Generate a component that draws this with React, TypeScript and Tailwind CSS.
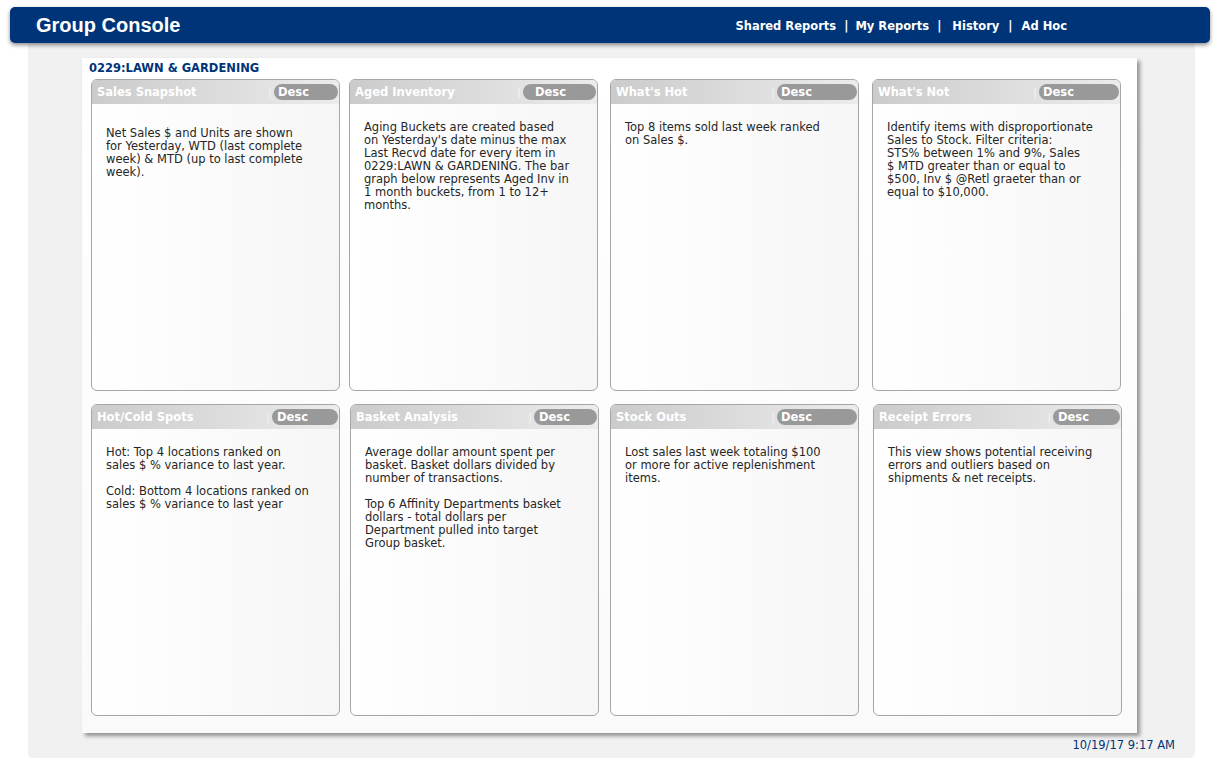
import React from "react";

type Card = {
  title: string;
  pillW: string;
  pillPl: string;
  pt: string;
  lines: string[];
  ml: string;
};

const top: Card[] = [
  {
    title: "Sales Snapshot",
    pillW: "w-[64px]",
    pillPl: "pl-[4px]",
    pt: "pt-[23px]",
    ml: "ml-[9px]",
    lines: [
      "Net Sales $ and Units are shown",
      "for Yesterday, WTD (last complete",
      "week) & MTD (up to last complete",
      "week).",
    ],
  },
  {
    title: "Aged Inventory",
    pillW: "w-[73px]",
    pillPl: "pl-[12px]",
    pt: "pt-[17px]",
    ml: "ml-[9px]",
    lines: [
      "Aging Buckets are created based",
      "on Yesterday's date minus the max",
      "Last Recvd date for every item in",
      "0229:LAWN & GARDENING. The bar",
      "graph below represents Aged Inv in",
      "1 month buckets, from 1 to 12+",
      "months.",
    ],
  },
  {
    title: "What's Hot",
    pillW: "w-[80px]",
    pillPl: "pl-[4px]",
    pt: "pt-[17px]",
    ml: "ml-[12px]",
    lines: ["Top 8 items sold last week ranked", "on Sales $."],
  },
  {
    title: "What's Not",
    pillW: "w-[80px]",
    pillPl: "pl-[4px]",
    pt: "pt-[17px]",
    ml: "ml-[13px]",
    lines: [
      "Identify items with disproportionate",
      "Sales to Stock. Filter criteria:",
      "STS% between 1% and 9%, Sales",
      "$ MTD greater than or equal to",
      "$500, Inv $ @Retl graeter than or",
      "equal to $10,000.",
    ],
  },
];

const bottom: Card[] = [
  {
    title: "Hot/Cold Spots",
    pillW: "w-[66px]",
    pillPl: "pl-[5px]",
    pt: "pt-[17px]",
    ml: "ml-[9px]",
    lines: [
      "Hot: Top 4 locations ranked on",
      "sales $ % variance to last year.",
      "",
      "Cold: Bottom 4 locations ranked on",
      "sales $ % variance to last year",
    ],
  },
  {
    title: "Basket Analysis",
    pillW: "w-[63px]",
    pillPl: "pl-[5px]",
    pt: "pt-[17px]",
    ml: "ml-[10px]",
    lines: [
      "Average dollar amount spent per",
      "basket. Basket dollars divided by",
      "number of transactions.",
      "",
      "Top 6 Affinity Departments basket",
      "dollars - total dollars per",
      "Department pulled into target",
      "Group basket.",
    ],
  },
  {
    title: "Stock Outs",
    pillW: "w-[80px]",
    pillPl: "pl-[4px]",
    pt: "pt-[17px]",
    ml: "ml-[11px]",
    lines: [
      "Lost sales last week totaling $100",
      "or more for active replenishment",
      "items.",
    ],
  },
  {
    title: "Receipt Errors",
    pillW: "w-[67px]",
    pillPl: "pl-[5px]",
    pt: "pt-[17px]",
    ml: "ml-[14px]",
    lines: [
      "This view shows potential receiving",
      "errors and outliers based on",
      "shipments & net receipts.",
    ],
  },
];

function CardBox({ c }: { c: Card }) {
  return (
    <div
      className={`${c.ml} w-[249px] h-[312px] border border-[#a6a6a6] rounded-[6px] overflow-hidden flex flex-col bg-gradient-to-r from-white to-[#f6f6f6]`}
    >
      <div className="h-[24px] shrink-0 flex items-center bg-gradient-to-r from-[#cbcbcb] to-[#ececec]">
        <div className="flex-1 pl-[5px] text-white font-bold text-[11.5px] leading-[13px] whitespace-nowrap">
          {c.title}
        </div>
        <span className="text-[#f4f4f4] text-[11px] leading-[13px] mr-[2px]">|</span>
        <div
          className={`${c.pillW} ${c.pillPl} h-[16px] mr-[1px] rounded-full bg-[#999999] text-white font-bold text-[11.5px] leading-[16px] whitespace-nowrap`}
        >
          Desc
        </div>
      </div>
      <div className={`${c.pt} pl-[14px] text-[11.5px] leading-[13px] text-[#262626]`}>
        {c.lines.map((l, i) => (
          <div key={i} className="h-[13px] whitespace-nowrap">
            {l}
          </div>
        ))}
      </div>
    </div>
  );
}

export default function App() {
  return (
    <div
      className="w-[1225px] h-[778px] bg-white overflow-hidden"
      style={{ fontFamily: '"DejaVu Sans", Verdana, sans-serif' }}
    >
      <div className="pt-[7px]">
        <div className="ml-[10px] w-[1200px] h-[36px] rounded-[5px] bg-[#003478] shadow-[0_2px_4px_rgba(0,0,0,0.45)] flex items-center relative z-10">
          <div
            className="pl-[26px] text-white font-bold text-[20px] leading-[24px]"
            style={{ fontFamily: '"Liberation Sans", Arial, sans-serif' }}
          >
            Group Console
          </div>
          <div className="ml-auto mr-[143px] mt-[2px] flex items-center text-white font-bold text-[11.5px] leading-[13px] whitespace-nowrap">
            <span>Shared Reports</span>
            <span className="ml-[8px]">|</span>
            <span className="ml-[7px]">My Reports</span>
            <span className="ml-[8px]">|</span>
            <span className="ml-[11px]">History</span>
            <span className="ml-[9px]">|</span>
            <span className="ml-[9px]">Ad Hoc</span>
          </div>
        </div>
        <div className="ml-[28px] w-[1167px] h-[715px] bg-[#f1f1f1] rounded-b-[5px] pt-[15px]">
          <div className="ml-[54px] w-[1055px] h-[675px] bg-gradient-to-b from-white to-[#fafafa] shadow-[3px_3px_4px_rgba(0,0,0,0.4)] pt-[4px]">
            <div className="pl-[7px] text-[#003478] font-bold text-[11.5px] leading-[13px]">
              0229:LAWN &amp; GARDENING
            </div>
            <div className="mt-[4px] flex">
              {top.map((c) => (
                <CardBox key={c.title} c={c} />
              ))}
            </div>
            <div className="mt-[13px] flex">
              {bottom.map((c) => (
                <CardBox key={c.title} c={c} />
              ))}
            </div>
          </div>
          <div className="mt-[6px] pr-[20px] text-right text-[#003478] text-[11.5px] leading-[13px]">
            10/19/17 9:17 AM
          </div>
        </div>
      </div>
    </div>
  );
}
